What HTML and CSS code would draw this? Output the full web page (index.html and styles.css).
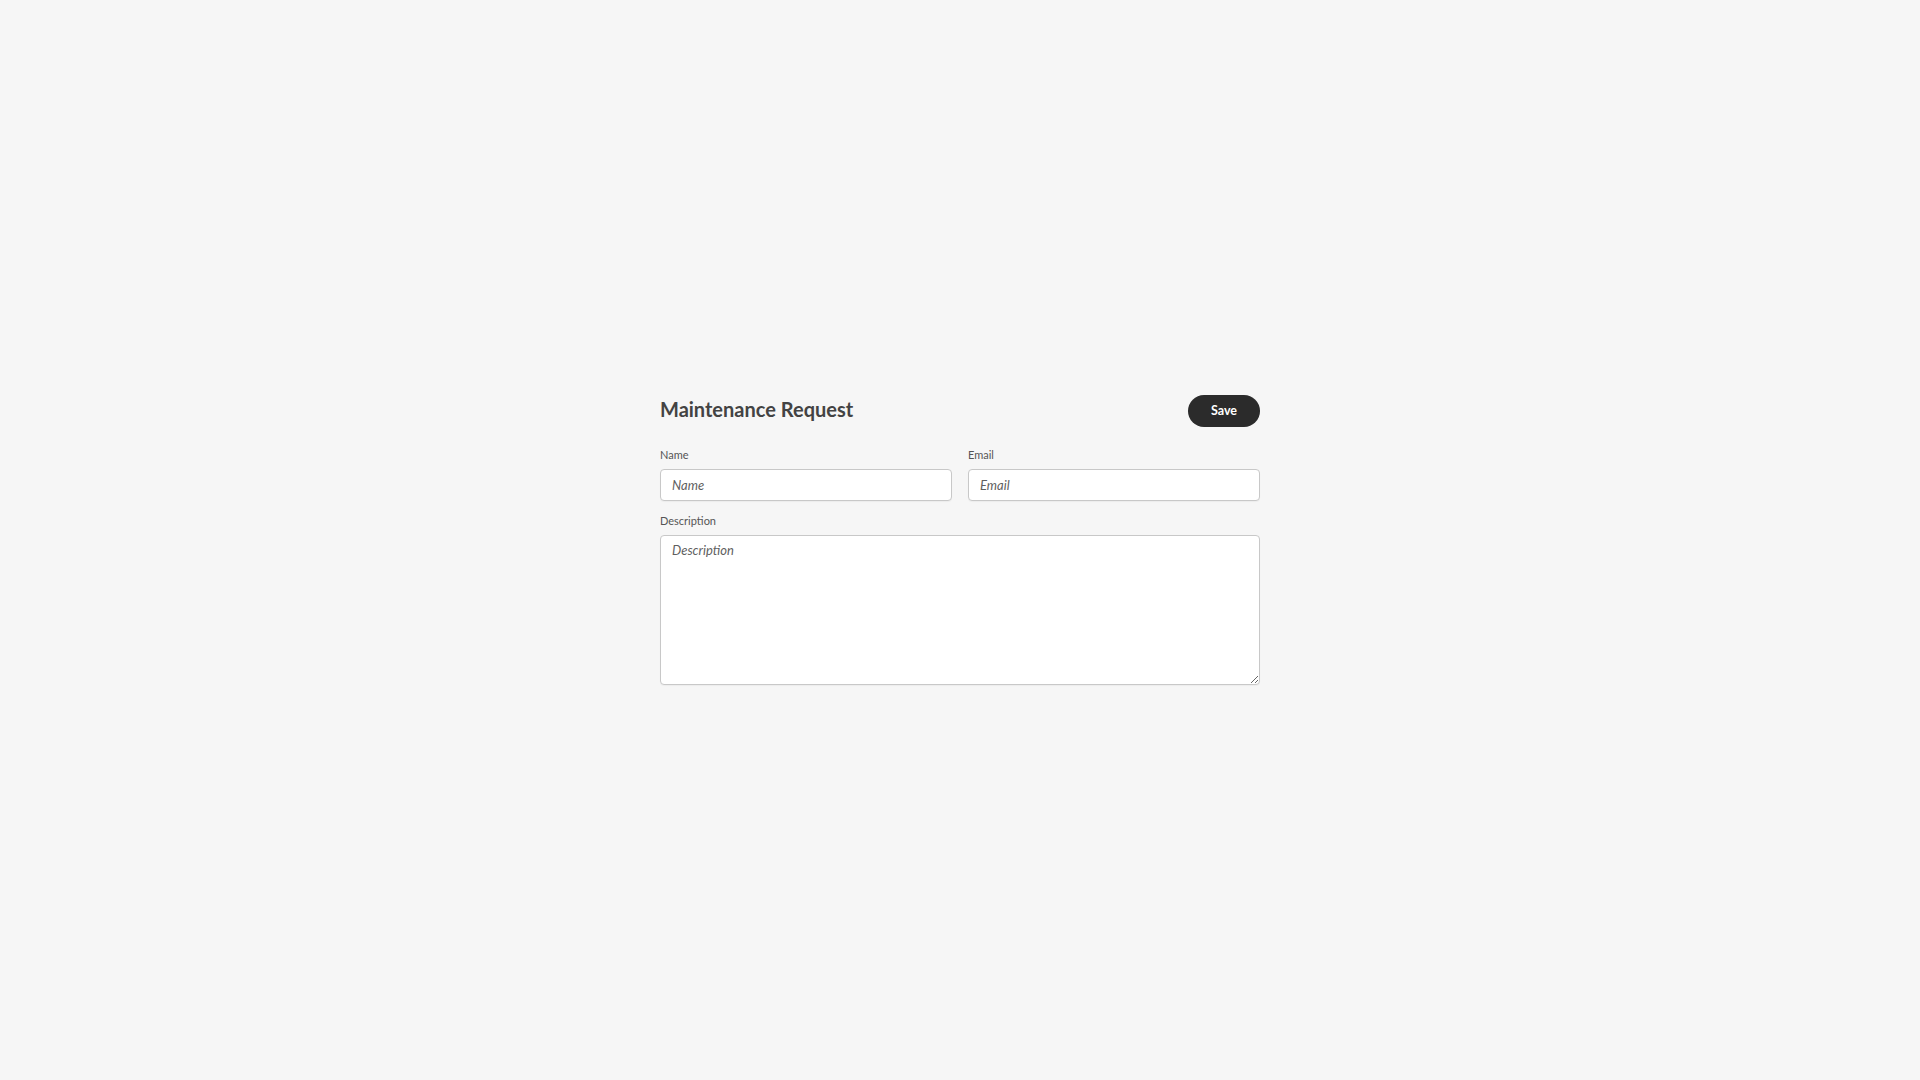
FILE: index.html
```html
<!DOCTYPE html>
<html lang="en">
<head>
<meta charset="utf-8">
<title>Maintenance Request</title>
<link rel="stylesheet" href="styles.css">
</head>
<body>
<main class="page">
  <form class="form">
    <div class="header">
      <h1 class="title">Maintenance Request</h1>
      <button type="button" class="save">Save</button>
    </div>
    <div class="row">
      <div class="field">
        <label class="label" for="name">Name</label>
        <input class="input" id="name" type="text" placeholder="Name">
      </div>
      <div class="field">
        <label class="label" for="email">Email</label>
        <input class="input" id="email" type="email" placeholder="Email">
      </div>
    </div>
    <div class="field">
      <label class="label" for="desc">Description</label>
      <textarea class="textarea" id="desc" placeholder="Description"></textarea>
    </div>
  </form>
</main>
</body>
</html>
```

FILE: styles.css
```css
* { box-sizing: border-box; }
html, body { margin: 0; padding: 0; }
body {
  background: #f6f6f6;
  font-family: Lato, "Liberation Sans", sans-serif;
  color: #444;
}
.page {
  height: 100vh;
  display: flex;
  align-items: center;
  justify-content: center;
}
.form {
  width: 600px;
  display: flex;
  flex-direction: column;
  gap: 12px;
}
.header {
  display: flex;
  align-items: center;
  justify-content: space-between;
  margin-bottom: 8px;
}
.title {
  margin: 0;
  padding-bottom: 4px;
  font-size: 20px;
  font-weight: 700;
  line-height: 28px;
  color: #434343;
}
.save {
  width: 72px;
  height: 32px;
  padding: 0 0 2px;
  border: none;
  border-radius: 16px;
  background: #2b2b2b;
  color: #fff;
  font-family: inherit;
  font-size: 12.5px;
  font-weight: 700;
  cursor: pointer;
}
.row {
  display: grid;
  grid-template-columns: 1fr 1fr;
  gap: 16px;
}
.field {
  display: flex;
  flex-direction: column;
  gap: 6px;
}
.label {
  font-size: 11px;
  line-height: 16px;
  color: #555;
}
.input, .textarea {
  width: 100%;
  border: 1px solid #c8c8c8;
  border-radius: 4px;
  background: #fff;
  font-family: inherit;
  font-size: 13px;
  line-height: 16px;
  color: #333;
  padding: 0 11px;
  box-shadow: 0 1px 1px rgba(0,0,0,0.04);
}
.input { height: 32px; }
.textarea {
  height: 150px;
  padding-top: 6px;
  resize: vertical;
  display: block;
}
.input::placeholder, .textarea::placeholder {
  font-style: italic;
  color: #5f5f5f;
  opacity: 1;
}
```
